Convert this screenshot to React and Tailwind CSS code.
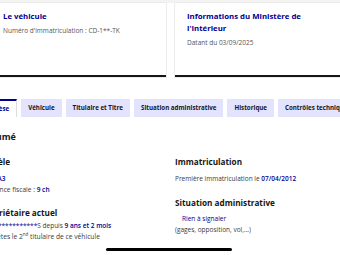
export default function App() {
  const tabs = ["Véhicule", "Titulaire et Titre", "Situation administrative", "Historique", "Contrôles techniques"];
  return (
    <div className="relative w-[340px] h-[255px] overflow-hidden bg-white font-['Open_Sans',sans-serif] text-[#3a3a3a]">
      {/* top cards */}
      <div className="border-t-[3px] border-[#f3f3f3]">
        <div className="flex gap-[9px] ml-[-9px]">
          <div className="w-[175px] h-[74px] shrink-0 bg-white shadow-[0_0_0_1px_#ececec] border-b-2 border-[#161616] px-[12px] pt-[7px]">
            <div className="text-[7.8px] leading-[12px] font-bold text-[#000091]">Le véhicule</div>
            <div className="mt-[3px] text-[6.5px] leading-[12px] text-[#555]">Numéro d'immatriculation : CD-1**-TK</div>
          </div>
          <div className="w-[175px] h-[74px] shrink-0 bg-white shadow-[0_0_0_1px_#ececec] border-b-2 border-[#161616] px-[12px] pt-[7px]">
            <div className="w-[125px] text-[7.8px] leading-[12px] font-bold text-[#000091]">Informations du Ministère de l'Intérieur</div>
            <div className="mt-[3px] text-[6.5px] leading-[12px] text-[#555]">Datant du 03/09/2025</div>
          </div>
        </div>
      </div>

      {/* tabs */}
      <div className="mt-[22px] ml-[-27px] flex gap-[4px] whitespace-nowrap">
        <div className="h-[18px] shrink-0 px-[7px] flex items-center bg-white border-t-2 border-[#000091] border-x border-x-[#dddddd] text-[6.2px] font-bold text-[#000091]">Synthèse</div>
        {tabs.map((t) => (
          <div key={t} className="h-[18px] shrink-0 px-[7px] flex items-center bg-[#e3e3fd] text-[6.2px] font-bold text-[#161616]">{t}</div>
        ))}
      </div>

      {/* content */}
      <div className="ml-[-20px]">
        <div className="mt-[14px] text-[9px] leading-[12px] font-bold text-[#161616]">Résumé</div>
        <div className="mt-[13px] flex">
          <div className="w-[195px] shrink-0">
            <div className="text-[8.2px] leading-[12px] font-bold text-[#161616]">Modèle</div>
            <div className="mt-[4.5px] text-[6.5px] leading-[11px] text-[#000091] font-semibold">AUDI A3</div>
            <div className="text-[6.6px] leading-[11px]">Puissance fiscale : <span className="text-[#000091] font-semibold">9 ch</span></div>
            <div className="mt-[12.5px] text-[8.2px] leading-[12px] font-bold text-[#161616]">Propriétaire actuel</div>
            <div className="mt-[0.5px] text-[6.5px] leading-[11px] whitespace-nowrap"><span className="text-[#000091]">****************</span>S depuis <span className="text-[#000091] font-semibold">9 ans et 2 mois</span></div>
            <div className="text-[6.7px] leading-[11px] whitespace-nowrap">Vous êtes le 2<sup className="text-[4.5px]">nd</sup> titulaire de ce véhicule</div>
          </div>
          <div className="w-[170px] shrink-0">
            <div className="text-[8.2px] leading-[12px] font-bold text-[#161616]">Immatriculation</div>
            <div className="mt-[4.5px] text-[6.5px] leading-[11px] whitespace-nowrap">Première immatriculation le <span className="text-[#000091] font-semibold">07/04/2012</span></div>
            <div className="mt-[13.5px] text-[8.2px] leading-[12px] font-bold text-[#161616]">Situation administrative</div>
            <div className="mt-[3.5px] ml-[7px] text-[6.5px] leading-[11px] text-[#000091]">Rien à signaler</div>
            <div className="text-[6.5px] leading-[11px]">(gages, opposition, vol,...)</div>
          </div>
        </div>
      </div>

      <div className="absolute bottom-[4px] left-[106px] w-[126px] h-[3px] rounded-full bg-black" />
    </div>
  );
}
